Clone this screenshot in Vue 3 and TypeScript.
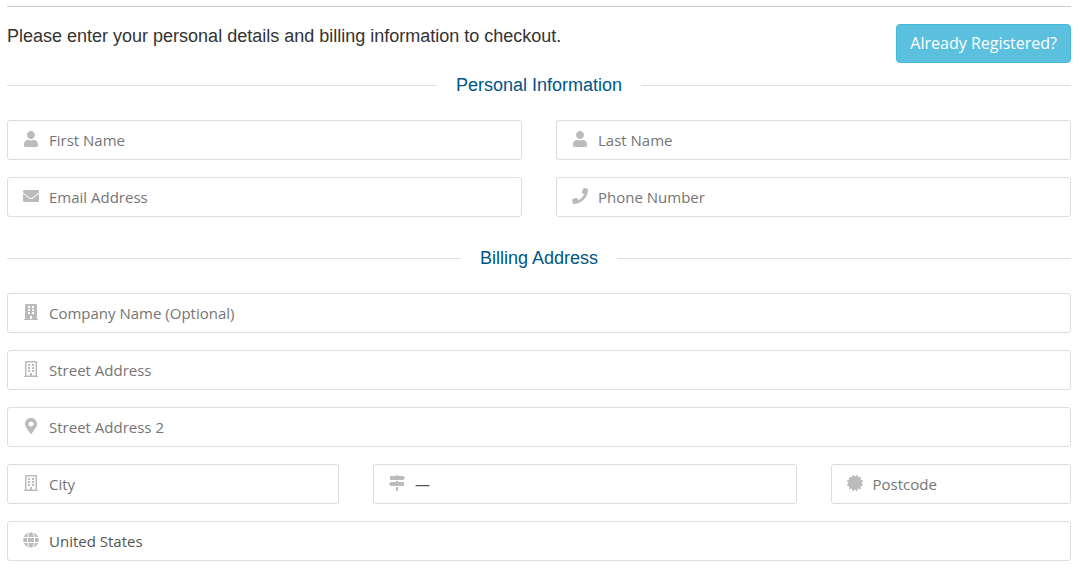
<script setup lang="ts">
import { reactive } from 'vue'

interface Icon {
  viewBox: string
  path: string
}

interface Field {
  id: string
  label: string
  icon: string
  span: number
  type?: string
  options?: string[]
}

interface Section {
  title: string
  fields: Field[]
}

// Outline of a round seal with flat-topped teeth
function sealPath(teeth: number, outer: number, inner: number): string {
  const points: string[] = []
  const step = Math.PI / teeth
  for (let i = 0; i < teeth * 2; i++) {
    const radius = i % 2 === 0 ? outer : inner
    for (const side of [-0.3, 0.3]) {
      const angle = (i + side + 1) * step
      points.push(`${(256 + radius * Math.cos(angle)).toFixed(1)} ${(256 + radius * Math.sin(angle)).toFixed(1)}`)
    }
  }
  return `M${points.join('L')}z`
}

// Two columns of three square windows, first row at the given height
function windowsPath(top: number): string {
  return [0, 96, 192]
    .flatMap((row) => [128, 256].map((x) => `M${x} ${top + row}h64v64h-64z`))
    .join('')
}

const buildingShell =
  'M436 480h-20V24c0-13.3-10.7-24-24-24H56C42.700 0 32 10.700 32 24v456H12c-6.600 0-12 5.400-12 12v20h448v-20c0-6.600-5.400-12-12-12z'

const icons: Record<string, Icon> = {
  user: {
    viewBox: '-32 0 512 512',
    path: 'M224 256c70.7 0 128-57.3 128-128S294.7 0 224 0 96 57.3 96 128s57.3 128 128 128zm89.6 32h-16.7c-22.2 10.2-46.9 16-72.9 16s-50.6-5.8-72.9-16h-16.7C60.2 288 0 348.2 0 422.4V464c0 26.5 21.5 48 48 48h352c26.5 0 48-21.5 48-48v-41.6c0-74.2-60.2-134.4-134.4-134.4z',
  },
  envelope: {
    viewBox: '0 0 512 512',
    path: 'M502.3 190.8c3.9-3.1 9.7-.2 9.7 4.7V400c0 26.5-21.5 48-48 48H48c-26.5 0-48-21.5-48-48V195.6c0-5 5.7-7.8 9.7-4.7 22.4 17.4 52.1 39.5 154.1 113.6 21.1 15.4 56.7 47.8 92.2 47.6 35.7.3 72-32.8 92.3-47.6 102-74.1 131.6-96.3 154-113.7zM256 320c23.2.4 56.6-29.2 73.4-41.4 132.7-96.3 142.8-104.7 173.4-128.7 5.8-4.5 9.2-11.5 9.2-18.9v-19c0-26.5-21.5-48-48-48H48c-26.5 0-48 21.5-48 48v19c0 7.4 3.4 14.3 9.2 18.9 30.6 23.9 40.7 32.4 173.4 128.7 16.8 12.2 50.2 41.8 73.4 41.4z',
  },
  phone: {
    viewBox: '0 0 512 512',
    path: 'M493.4 24.6l-104-24c-11.3-2.6-22.9 3.3-27.5 13.9l-48 112c-4.2 9.8-1.4 21.3 6.9 28l60.6 49.6c-36 76.7-98.9 140.5-177.2 177.2l-49.6-60.6c-6.8-8.3-18.2-11.1-28-6.9l-112 48C3.9 366.5-2 378.1.6 389.4l24 104C27.1 504.2 36.7 512 48 512c256.1 0 464-207.5 464-464 0-11.2-7.7-20.9-18.6-23.4z',
  },
  building: {
    viewBox: '-32 0 512 512',
    path: `${buildingShell}${windowsPath(64)}M192 384h64v96h-64z`,
  },
  buildingOutline: {
    viewBox: '-32 0 512 512',
    path: `${buildingShell}M80 48V464H192V384h64v80h112V48z${windowsPath(96)}`,
  },
  marker: {
    viewBox: '-64 0 512 512',
    path: 'M172.3 501.7C27 291 0 269.4 0 192 0 86 86 0 192 0s192 86 192 192c0 77.400-27 99-172.300 309.700-9.500 13.800-29.900 13.800-39.400 0zM192 272c44.200 0 80-35.800 80-80s-35.800-80-80-80-80 35.800-80 80 35.800 80 80 80z',
  },
  signs: {
    viewBox: '0 0 512 512',
    path: 'M507.31 84.69L464 41.37c-6-6-14.14-9.37-22.63-9.37H288V16c0-8.84-7.16-16-16-16h-32c-8.84 0-16 7.16-16 16v16H56c-13.25 0-24 10.75-24 24v80c0 13.25 10.75 24 24 24h385.37c8.49 0 16.62-3.37 22.63-9.37l43.31-43.31c6.25-6.26 6.25-16.38 0-22.63zM224 496c0 8.84 7.16 16 16 16h32c8.84 0 16-7.16 16-16V384h-64v112zm232-272H288v-32h-64v32H70.63c-8.49 0-16.62 3.37-22.63 9.37L4.69 276.69c-6.25 6.25-6.25 16.38 0 22.63L48 342.63c6 6 14.14 9.37 22.63 9.37H456c13.25 0 24-10.75 24-24v-80c0-13.25-10.75-24-24-24z',
  },
  seal: {
    viewBox: '0 0 512 512',
    path: sealPath(12, 260, 218),
  },
  globe: {
    viewBox: '-8 0 512 512',
    path: 'M336.5 160C322 70.7 287.8 8 248 8s-74 62.7-88.5 152h177zM152 256c0 22.2 1.2 43.5 3.3 64h185.3c2.1-20.5 3.3-41.8 3.3-64s-1.2-43.5-3.3-64H155.3c-2.1 20.5-3.3 41.8-3.3 64zm324.7-96c-28.6-67.9-86.5-120.4-158-141.6 24.4 33.8 41.2 84.7 50 141.6h108zM177.2 18.4C105.8 39.6 47.8 92.1 19.3 160h108c8.7-56.9 25.5-107.8 49.9-141.6zM487.4 192H372.7c2.1 21 3.3 42.5 3.3 64s-1.2 43-3.3 64h114.6c5.5-20.5 8.6-41.8 8.6-64s-3.1-43.5-8.5-64zM120 256c0-21.5 1.2-43 3.3-64H8.6C3.2 212.5 0 233.8 0 256s3.2 43.5 8.6 64h114.6c-2-21-3.2-42.5-3.2-64zm39.5 96c14.5 89.3 48.7 152 88.5 152s74-62.7 88.5-152h-177zm159.3 141.6c71.4-21.2 129.4-73.7 158-141.6h-108c-8.8 56.9-25.6 107.8-50 141.6zM19.3 352c28.6 67.9 86.5 120.4 158 141.6-24.4-33.8-41.2-84.7-50-141.6h-108z',
  },
}

const sections: Section[] = [
  {
    title: 'Personal Information',
    fields: [
      { id: 'firstName', label: 'First Name', icon: 'user', span: 6 },
      { id: 'lastName', label: 'Last Name', icon: 'user', span: 6 },
      { id: 'email', label: 'Email Address', icon: 'envelope', span: 6, type: 'email' },
      { id: 'phone', label: 'Phone Number', icon: 'phone', span: 6, type: 'tel' },
    ],
  },
  {
    title: 'Billing Address',
    fields: [
      { id: 'company', label: 'Company Name (Optional)', icon: 'building', span: 12 },
      { id: 'street', label: 'Street Address', icon: 'buildingOutline', span: 12 },
      { id: 'street2', label: 'Street Address 2', icon: 'marker', span: 12 },
      { id: 'city', label: 'City', icon: 'buildingOutline', span: 4 },
      { id: 'state', label: 'State', icon: 'signs', span: 5, options: ['—'] },
      { id: 'postcode', label: 'Postcode', icon: 'seal', span: 3 },
      { id: 'country', label: 'Country', icon: 'globe', span: 12, options: ['United States'] },
    ],
  },
]

const form = reactive<Record<string, string>>({ state: '—', country: 'United States' })
</script>

<template>
  <main class="checkout">
    <header class="intro">
      <p class="lead">Please enter your personal details and billing information to checkout.</p>
      <button type="button" class="registered">Already Registered?</button>
    </header>
    <form @submit.prevent>
      <section v-for="section in sections" :key="section.title" class="section">
        <h2 class="heading">{{ section.title }}</h2>
        <div class="grid">
          <div v-for="field in section.fields" :key="field.id" class="field" :class="`span-${field.span}`">
            <label :for="field.id" class="icon" :aria-label="field.label">
              <svg :viewBox="icons[field.icon].viewBox" aria-hidden="true">
                <path :d="icons[field.icon].path" fill-rule="evenodd" />
              </svg>
            </label>
            <select v-if="field.options" :id="field.id" v-model="form[field.id]" class="control">
              <option v-for="option in field.options" :key="option">{{ option }}</option>
            </select>
            <input
              v-else
              :id="field.id"
              v-model="form[field.id]"
              :type="field.type ?? 'text'"
              :placeholder="field.label"
              class="control"
            />
          </div>
        </div>
      </section>
    </form>
  </main>
</template>

<style>
body {
  margin: 0;
  background: #fff;
}
</style>

<style scoped>
.checkout {
  margin: 6px 9px 0 7px;
  border-top: 1px solid #ccc;
  font-family: 'Open Sans', 'Noto Sans', sans-serif;
}

.intro {
  display: flex;
  justify-content: space-between;
  align-items: flex-start;
  padding-top: 17px;
}

.lead {
  margin: 0;
  font: 18px/24px 'Liberation Sans', Arial, sans-serif;
  color: #333;
}

.registered {
  height: 39px;
  padding: 0 13px 2px;
  border: 1px solid #46b8da;
  border-radius: 4px;
  background: #5bc0de;
  color: #fff;
  font: 16px/24px 'Open Sans', 'Noto Sans', sans-serif;
  cursor: pointer;
}

.section {
  padding-top: 11px;
}

.section + .section {
  padding-top: 30px;
}

.heading {
  display: flex;
  align-items: center;
  gap: 19px;
  margin: 0 0 23px;
  font: 18px/23px 'Liberation Sans', Arial, sans-serif;
  color: #058;
}

.heading::before,
.heading::after {
  content: '';
  flex: 1;
  border-top: 1px solid #ddd;
}

.grid {
  display: grid;
  grid-template-columns: repeat(12, minmax(0, 1fr));
  gap: 17px 34px;
}

.field {
  position: relative;
  display: flex;
}

.span-3 {
  grid-column: span 3;
}

.span-4 {
  grid-column: span 4;
}

.span-5 {
  grid-column: span 5;
}

.span-6 {
  grid-column: span 6;
}

.span-12 {
  grid-column: span 12;
}

.icon {
  position: absolute;
  top: 11px;
  left: 16px;
  display: flex;
}

.icon svg {
  width: 16px;
  height: 16px;
  fill: #bbb;
}

.control {
  box-sizing: border-box;
  width: 100%;
  height: 40px;
  padding: 0 12px 0 41px;
  border: 1px solid #ddd;
  border-radius: 3px;
  background: transparent;
  color: #555;
  font: 15px/20px 'Open Sans', 'Noto Sans', sans-serif;
  appearance: none;
}

.control::placeholder {
  color: #757575;
  opacity: 1;
}
</style>
